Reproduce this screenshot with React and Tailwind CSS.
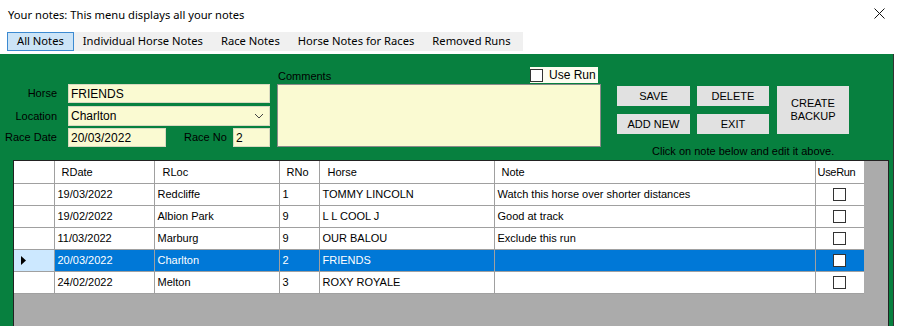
import React from 'react'

const rows = [
  { date: '19/03/2022', loc: 'Redcliffe', no: '1', horse: 'TOMMY LINCOLN', note: 'Watch this horse over shorter distances' },
  { date: '19/02/2022', loc: 'Albion Park', no: '9', horse: 'L L COOL J', note: 'Good at track' },
  { date: '11/03/2022', loc: 'Marburg', no: '9', horse: 'OUR BALOU', note: 'Exclude this run' },
  { date: '20/03/2022', loc: 'Charlton', no: '2', horse: 'FRIENDS', note: '', selected: true },
  { date: '24/02/2022', loc: 'Melton', no: '3', horse: 'ROXY ROYALE', note: '' },
]

const tabs = ['All Notes', 'Individual Horse Notes', 'Race Notes', 'Horse Notes for Races', 'Removed Runs']

const sans = "font-['Liberation_Sans',Arial,sans-serif]"
const ui = "font-['Noto_Sans',sans-serif]"

const Btn = ({ children, className = '' }) => (
  <button className={`bg-[#e1e1e1] text-[11px] text-black leading-[13px] flex items-center justify-center ${className}`}>
    {children}
  </button>
)

const Check = () => <span className="inline-block w-[13px] h-[13px] border border-[#333] bg-white" />

const App = () => {
  return (
    <div className={`w-[897px] h-[326px] bg-white overflow-hidden ${sans}`}>
      <div className={`h-[30px] flex items-center justify-between pl-[8px] pr-[12px] text-[11.2px] text-black ${ui}`}>
        <span className="whitespace-nowrap">Your notes: This menu displays all your notes</span>
        <svg width="11" height="11" viewBox="0 0 11 11" className="mt-[-3px]">
          <path d="M0.5 0.5 L10.5 10.5 M10.5 0.5 L0.5 10.5" stroke="#111" strokeWidth="1" />
        </svg>
      </div>
      <div className="h-[24px] pl-[7px] pt-[2px]">
        <div className={`flex w-[516px] h-[19px] bg-[#f0f0f0] text-[11.2px] text-black whitespace-nowrap ${ui}`}>
          {tabs.map((t, i) => (
            <div
              key={t}
              className={`h-[19px] shrink-0 flex items-center px-[9px] ${i === 0 ? 'bg-[#cce4f7] border border-[#3c8ad1]' : ''}`}
            >
              {t}
            </div>
          ))}
        </div>
      </div>
      <div className="h-[272px] bg-[#07803f] border-r border-[#333] w-[894px]">
        <div className="h-[106px] flex pl-[5px] pt-[13px] text-[11px] text-black">
          <div className="w-[265px] pt-[17px] flex flex-col">
            <div className="flex items-center h-[19px]">
              <span className="w-[52px] text-right">Horse</span>
              <div className="ml-[11px] w-[202px] h-[19px] bg-[#fafad2] border border-[#d9d9c0] flex items-center pl-[2px] text-[12px]">FRIENDS</div>
            </div>
            <div className="flex items-center h-[20px] mt-[3px]">
              <span className="w-[52px] text-right">Location</span>
              <div className="ml-[11px] w-[202px] h-[20px] bg-[#fafad2] border border-[#d9d9c0] flex items-center pl-[2px] text-[12px] justify-between">
                <span>Charlton</span>
                <svg width="10" height="6" viewBox="0 0 10 6" className="mr-[5px]">
                  <path d="M1 1 L5 5 L9 1" stroke="#444" strokeWidth="1" fill="none" />
                </svg>
              </div>
            </div>
            <div className="flex items-center h-[19px] mt-[2px]">
              <span className="w-[52px] text-right">Race Date</span>
              <div className="ml-[11px] w-[98px] h-[19px] bg-[#fafad2] border border-[#d9d9c0] flex items-center pl-[2px] text-[12px]">20/03/2022</div>
              <span className="ml-[18px] w-[45px]">Race No</span>
              <div className="ml-[4px] w-[37px] h-[19px] bg-[#fafad2] border border-[#d9d9c0] flex items-center pl-[2px] text-[12px]">2</div>
            </div>
          </div>
          <div className="ml-[7px] w-[324px] flex flex-col">
            <div className="h-[17px] flex items-start justify-between">
              <span className="mt-[1px] ml-[1px]">Comments</span>
              <div className="mr-[3px] w-[68px] h-[16px] bg-[#fdfdf0] flex items-center text-[12px]">
                <Check />
                <span className="ml-[6px]">Use Run</span>
              </div>
            </div>
            <div className="h-[63px] bg-[#fafad2] border border-[#8a8a8a]" />
          </div>
          <div className="ml-[16px] pt-[19px] flex flex-col">
            <div className="flex">
              <div className="grid grid-cols-[73px_72px] gap-x-[7px] gap-y-[8px]">
                <Btn className="h-[20px]">SAVE</Btn>
                <Btn className="h-[20px]">DELETE</Btn>
                <Btn className="h-[20px]">ADD NEW</Btn>
                <Btn className="h-[20px]">EXIT</Btn>
              </div>
              <Btn className="ml-[8px] w-[72px] h-[48px] flex-col">
                <span>CREATE</span>
                <span>BACKUP</span>
              </Btn>
            </div>
            <div className="mt-[11px] ml-[35px] text-[11px] leading-[13px] whitespace-nowrap">Click on note below and edit it above.</div>
          </div>
        </div>
        <div className="ml-[13px] w-[876px] h-[172px] border border-[#222] bg-[#ababab]">
          <table className="table-fixed border-collapse text-[11px] text-black bg-white w-[850px]">
            <colgroup>
              <col className="w-[40px]" />
              <col className="w-[100px]" />
              <col className="w-[125px]" />
              <col className="w-[40px]" />
              <col className="w-[175px]" />
              <col className="w-[321px]" />
              <col className="w-[49px]" />
            </colgroup>
            <thead>
              <tr className="h-[22px]">
                <th className="border-r border-b border-[#a0a0a0]" />
                <th className="border-r border-b border-[#a0a0a0] text-left font-normal pl-[7px]">RDate</th>
                <th className="border-r border-b border-[#a0a0a0] text-left font-normal pl-[8px]">RLoc</th>
                <th className="border-r border-b border-[#a0a0a0] text-left font-normal pl-[7px]">RNo</th>
                <th className="border-r border-b border-[#a0a0a0] text-left font-normal pl-[8px]">Horse</th>
                <th className="border-r border-b border-[#a0a0a0] text-left font-normal pl-[7px]">Note</th>
                <th className="border-b border-[#a0a0a0] text-left font-normal pl-[2px] tracking-[-0.3px]">UseRun</th>
              </tr>
            </thead>
            <tbody>
              {rows.map((r) => {
                const cell = `border-r border-b border-[#a0a0a0] text-left pl-[3px] ${r.selected ? 'bg-[#0078d7] text-white' : ''}`
                return (
                  <tr key={r.date + r.horse} className="h-[22px]">
                    <td className={`border-r border-b border-[#a0a0a0] ${r.selected ? 'bg-[#cce8ff]' : ''}`}>
                      {r.selected && (
                        <svg width="5" height="9" viewBox="0 0 5 9" className="ml-[7px]">
                          <path d="M0 0 L5 4.5 L0 9 Z" fill="#000" />
                        </svg>
                      )}
                    </td>
                    <td className={cell}>{r.date}</td>
                    <td className={cell}>{r.loc}</td>
                    <td className={cell}>{r.no}</td>
                    <td className={cell}>{r.horse}</td>
                    <td className={cell}>{r.note}</td>
                    <td className={`border-b border-[#a0a0a0] text-center ${r.selected ? 'bg-[#0078d7]' : ''}`}>
                      <div className="flex justify-center items-center">
                        <Check />
                      </div>
                    </td>
                  </tr>
                )
              })}
            </tbody>
          </table>
        </div>
      </div>
    </div>
  )
}

export default App
